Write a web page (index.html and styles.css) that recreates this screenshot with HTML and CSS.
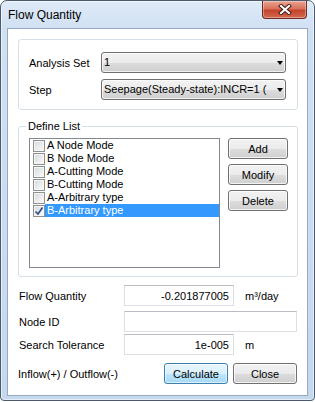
FILE: index.html
```html
<!DOCTYPE html>
<html><head>
<meta charset="UTF-8">
<title>Flow Quantity</title>
<link rel="stylesheet" href="styles.css">
</head>
<body>
<div class="window">
  <div class="titlebar">
    <span class="title">Flow Quantity</span>
    <div class="close-btn">
      <svg width="14" height="11" viewBox="0 0 14 11">
        <path d="M3 2 L11 9 M11 2 L3 9" stroke="#3b1610" stroke-width="4" stroke-linecap="square"/>
        <path d="M3 2 L11 9 M11 2 L3 9" stroke="#fff" stroke-width="2.2" stroke-linecap="square"/>
      </svg>
    </div>
  </div>
  <div class="client">
    <div class="group">
      <label class="lbl">Analysis Set</label>
      <div class="combo"><span class="combo-text">1</span><span class="arrow"></span></div>
      <label class="lbl">Step</label>
      <div class="combo"><span class="combo-text">Seepage(Steady-state):INCR=1 (</span><span class="arrow"></span></div>
    </div>

    <fieldset class="define">
      <legend>Define List</legend>
      <div class="list">
        <div class="item"><span class="chk"></span><span class="txt">A Node Mode</span></div>
        <div class="item"><span class="chk"></span><span class="txt">B Node Mode</span></div>
        <div class="item"><span class="chk"></span><span class="txt">A-Cutting Mode</span></div>
        <div class="item"><span class="chk"></span><span class="txt">B-Cutting Mode</span></div>
        <div class="item"><span class="chk"></span><span class="txt">A-Arbitrary type</span></div>
        <div class="item sel"><span class="chk on">
          <svg width="10" height="10" viewBox="0 0 10 10"><path d="M1.5 5.5 L4 8 L8.5 1.5" fill="none" stroke="#2f4a8a" stroke-width="1.6"/></svg>
        </span><span class="txt">B-Arbitrary type</span></div>
      </div>
      <div class="side">
        <button class="btn">Add</button>
        <button class="btn">Modify</button>
        <button class="btn">Delete</button>
      </div>
    </fieldset>

    <div class="fields">
      <div class="frow">
        <span class="flabel">Flow Quantity</span>
        <input class="tb num" type="text" value="-0.201877005">
        <span class="unit">m³/day</span>
      </div>
      <div class="frow r2">
        <span class="flabel">Node ID</span>
        <input class="tb wide" type="text" value="">
      </div>
      <div class="frow r3">
        <span class="flabel">Search Tolerance</span>
        <input class="tb num" type="text" value="1e-005">
        <span class="unit">m</span>
      </div>
    </div>

    <div class="footer">
      <span class="note">Inflow(+) / Outflow(-)</span>
      <div class="actions">
        <button class="btn wbtn default">Calculate</button>
        <button class="btn wbtn">Close</button>
      </div>
    </div>
  </div>
</div>
</body></html>
```

FILE: styles.css
```css
* {
  box-sizing: border-box;
}
html,
body {
  margin: 0;
  padding: 0;
  background: #fff;
}
body {
  font-family: "Liberation Sans", Arial, sans-serif;
  font-size: 11px;
  color: #000;
}
.window {
  width: 315px;
  height: 401px;
  border: 1px solid #4b5b6d;
  border-radius: 7px 7px 4px 4px;
  background: linear-gradient(180deg, #dfeaf7 0%, #cfe0f3 30px, #c4d8ee 100%);
  box-shadow: inset 0 0 0 1px rgba(255, 255, 255, 0.55);
  padding: 0 6px 4px 6px;
  display: flex;
  flex-direction: column;
}
.titlebar {
  height: 27px;
  display: flex;
  justify-content: space-between;
  align-items: flex-start;
}
.title {
  font-size: 12px;
  line-height: 14px;
  padding: 7px 0 0 1px;
}
.close-btn {
  width: 45px;
  height: 18px;
  margin-right: 1px;
  border: 1px solid #6a2c22;
  border-top: none;
  border-radius: 0 0 4px 4px;
  background: linear-gradient(180deg, #e9a592 0%, #d9705a 45%, #c4452b 55%, #d2694f 100%);
  box-shadow: inset 0 0 0 1px rgba(255, 255, 255, 0.35);
  display: flex;
  align-items: center;
  justify-content: center;
}
.client {
  flex: 1;
  border: 1px solid #97a9bf;
  background: #fff;
  padding: 10px 9px 0 10px;
}

/* analysis set / step */
.group {
  height: 71px;
  border: 1px solid #d5dfe5;
  border-radius: 3px;
  padding: 12px 11px 9px 10px;
  display: grid;
  grid-template-columns: 72px 185px;
  grid-template-rows: 21px 21px;
  row-gap: 6px;
  align-items: center;
}
.combo {
  width: 185px;
  min-width: 0;
  height: 21px;
  border: 1px solid #707070;
  border-radius: 3px;
  background: linear-gradient(180deg, #f2f2f2 0%, #ebebeb 50%, #dddddd 51%, #cfcfcf 100%);
  box-shadow: inset 0 0 0 1px rgba(255, 255, 255, 0.7);
  display: flex;
  align-items: center;
  padding-left: 2px;
}
.combo-text {
  flex: 1;
  min-width: 0;
  white-space: nowrap;
  overflow: hidden;
  line-height: 19px;
}
.arrow {
  flex: none;
  width: 0;
  height: 0;
  border-left: 3.5px solid transparent;
  border-right: 3.5px solid transparent;
  border-top: 4px solid #000;
  margin: 1px 2px 0 6px;
}

/* define list */
.define {
  margin: 10px 0 0;
  height: 157px;
  border: 1px solid #d5dfe5;
  border-radius: 3px;
  padding: 5px 9px 8px 10px;
  min-width: 0;
  display: flex;
}
.define legend {
  padding: 0 2px;
  margin-left: -3px;
  line-height: 13px;
}
.list {
  width: 191px;
  height: 130px;
  border: 1px solid #828790;
  background: #fff;
}
.item {
  height: 13px;
  display: flex;
  align-items: center;
  padding-left: 3px;
}
.chk {
  width: 12px;
  height: 12px;
  border: 1px solid #8e8f8f;
  background: linear-gradient(135deg, #d6d8db 0%, #eeeeee 60%, #fbfbfb 100%);
  box-shadow: inset 0 0 0 1px #f6f6f6;
  display: flex;
  align-items: center;
  justify-content: center;
}
.txt {
  flex: 1;
  line-height: 13px;
  padding-left: 2px;
  white-space: nowrap;
}
.sel .txt {
  background: #3399ff;
  color: #fff;
}
.side {
  margin-left: 8px;
  display: flex;
  flex-direction: column;
  gap: 5px;
}
.btn {
  width: 60px;
  height: 21px;
  padding: 0;
  font-family: inherit;
  font-size: 11px;
  color: #000;
  border: 1px solid #707070;
  border-radius: 3px;
  background: linear-gradient(180deg, #f2f2f2 0%, #ebebeb 50%, #dddddd 51%, #cfcfcf 100%);
  box-shadow: inset 0 0 0 1px rgba(255, 255, 255, 0.75);
}

/* result fields */
.fields {
  margin-top: 8px;
}
.frow {
  display: flex;
  align-items: center;
  height: 21px;
}
.r2 {
  margin-top: 5px;
}
.r3 {
  margin-top: 2px;
}
.flabel {
  width: 106px;
  padding-left: 1px;
}
.tb {
  height: 21px;
  border: 1px solid #dcdfe4;
  border-top-color: #b9bcc2;
  font-family: inherit;
  font-size: 11px;
  padding: 0 4px;
  color: #000;
  outline: none;
}
.num {
  width: 110px;
  text-align: right;
}
.wide {
  width: 173px;
}
.unit {
  margin-left: 11px;
}

.footer {
  margin-top: 8px;
  display: flex;
  align-items: center;
}
.note {
  flex: 1;
}
.actions {
  display: flex;
  gap: 5px;
  margin-right: 1px;
}
.wbtn {
  width: 64px;
}
.btn.default {
  border-color: #3c7fb1;
  background: linear-gradient(180deg, #eaf6fd 0%, #d9f0fc 50%, #bee6fd 51%, #a7d9f5 100%);
  box-shadow: inset 0 0 0 1px rgba(255, 255, 255, 0.6);
}
```
